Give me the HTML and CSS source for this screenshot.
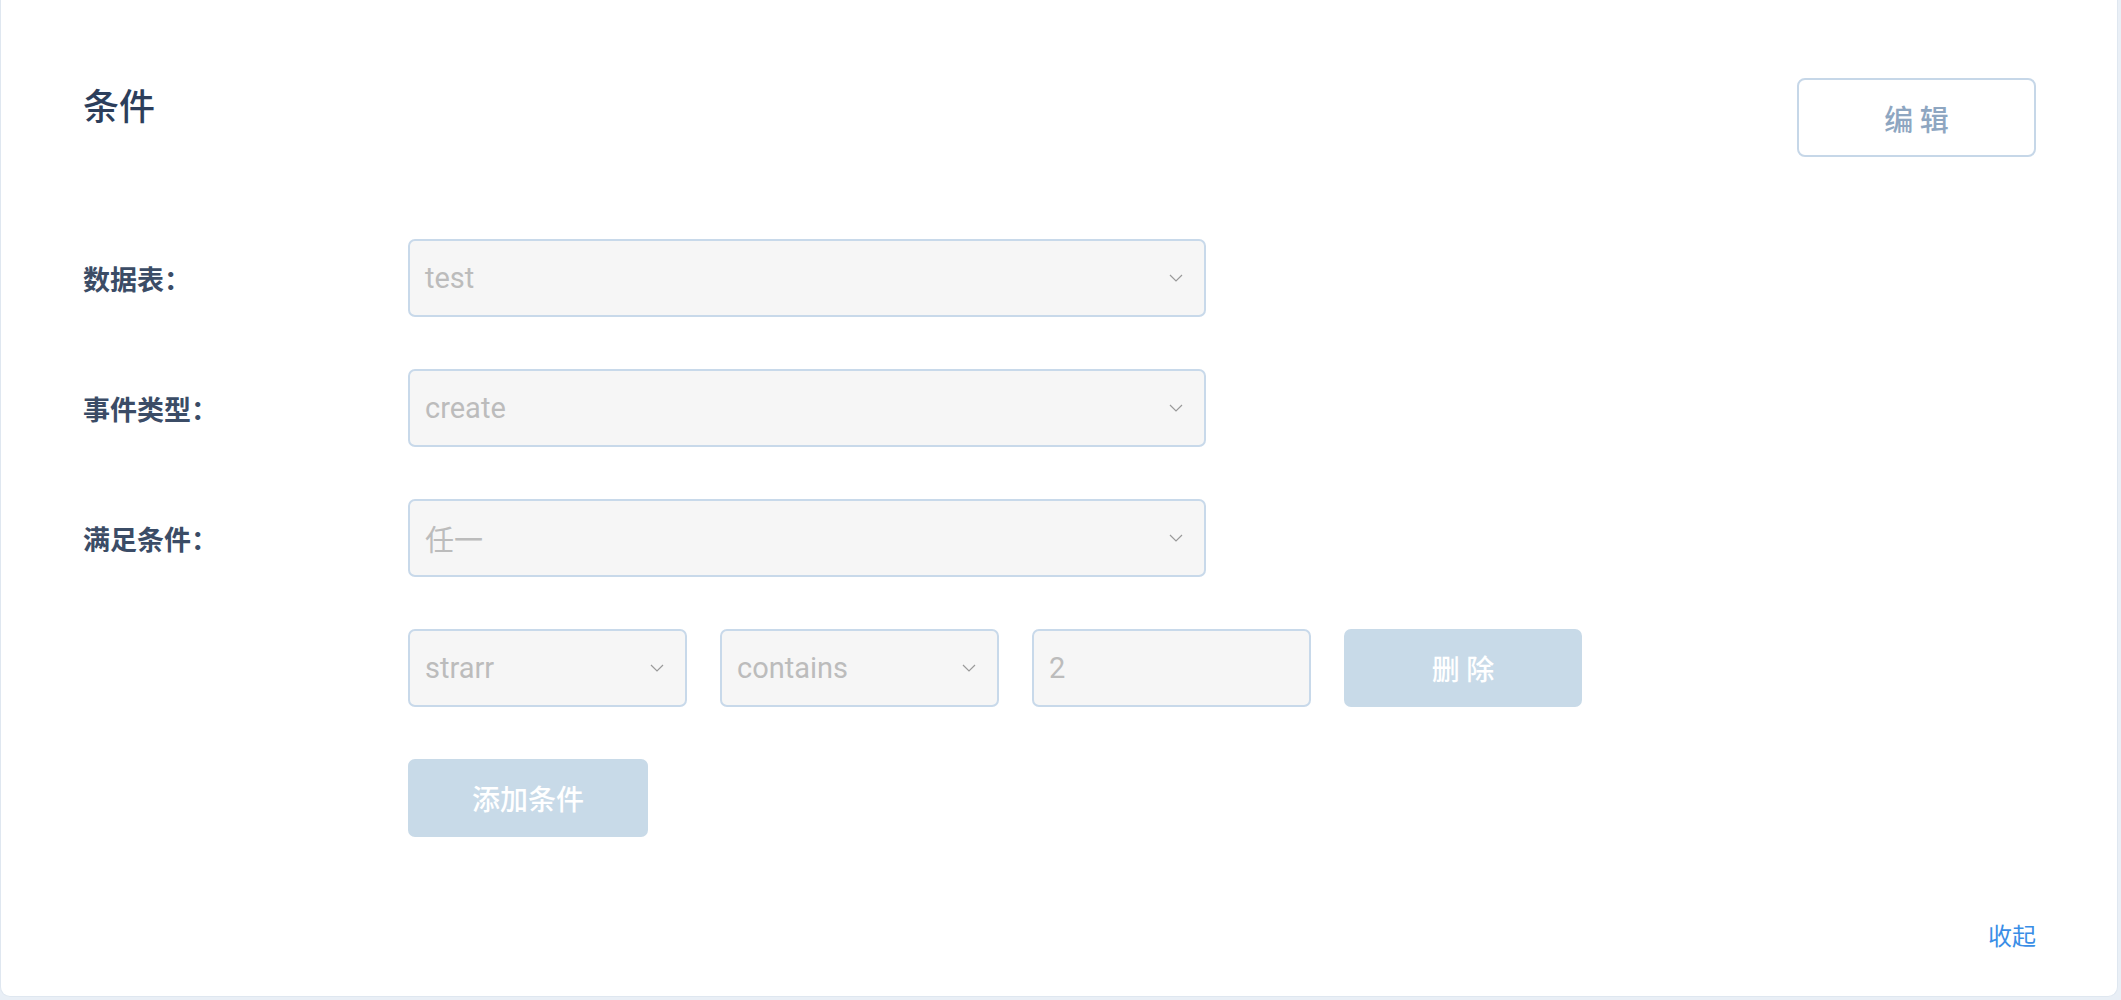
FILE: index.html
```html
<!DOCTYPE html>
<html lang="zh-CN">
<head>
    <meta charset="UTF-8">
    <meta name="viewport" content="width=device-width, initial-scale=1.0">
    <title>条件</title>
    <link rel="stylesheet" href="styles.css">
</head>
<body>
    <div class="card">
        <div class="card-head">
            <h2 class="title">条件</h2>
            <button type="button" class="btn-outline">编 辑</button>
        </div>

        <div class="form">
            <div class="form-row">
                <label class="form-label">数据表：</label>
                <div class="select wide">
                    <span>test</span>
                    <svg class="arrow" width="14" height="8" viewBox="0 0 14 8"><path d="M1 1l6 6 6-6" fill="none" stroke="#9a9a9a" stroke-width="1.2"/></svg>
                </div>
            </div>
            <div class="form-row">
                <label class="form-label">事件类型：</label>
                <div class="select wide">
                    <span>create</span>
                    <svg class="arrow" width="14" height="8" viewBox="0 0 14 8"><path d="M1 1l6 6 6-6" fill="none" stroke="#9a9a9a" stroke-width="1.2"/></svg>
                </div>
            </div>
            <div class="form-row">
                <label class="form-label">满足条件：</label>
                <div class="select wide">
                    <span>任一</span>
                    <svg class="arrow" width="14" height="8" viewBox="0 0 14 8"><path d="M1 1l6 6 6-6" fill="none" stroke="#9a9a9a" stroke-width="1.2"/></svg>
                </div>
            </div>
            <div class="form-row">
                <span class="form-label"></span>
                <div class="cond">
                    <div class="select small">
                        <span>strarr</span>
                        <svg class="arrow" width="14" height="8" viewBox="0 0 14 8"><path d="M1 1l6 6 6-6" fill="none" stroke="#9a9a9a" stroke-width="1.2"/></svg>
                    </div>
                    <div class="select small">
                        <span>contains</span>
                        <svg class="arrow" width="14" height="8" viewBox="0 0 14 8"><path d="M1 1l6 6 6-6" fill="none" stroke="#9a9a9a" stroke-width="1.2"/></svg>
                    </div>
                    <div class="select small">
                        <span>2</span>
                    </div>
                    <button type="button" class="btn-fill del">删 除</button>
                </div>
            </div>
            <div class="form-row">
                <span class="form-label"></span>
                <button type="button" class="btn-fill add">添加条件</button>
            </div>
        </div>

        <div class="card-foot">
            <a class="link">收起</a>
        </div>
    </div>
</body>
</html>
```

FILE: styles.css
```css
body {
    margin: 0;
    padding: 0;
    background-color: #e9eff6;
    font-family: "Noto Sans CJK SC", "Noto Sans", sans-serif;
}

.card {
    box-sizing: border-box;
    height: 997px;
    margin: 0 3px 0 0;
    padding: 78px 81px 46px 82px;
    background-color: #fff;
    border: 1px solid #dfe7f0;
    border-top: none;
    border-radius: 0 0 10px 10px;
    display: flex;
    flex-direction: column;
}

.card-head {
    display: flex;
    justify-content: space-between;
    align-items: flex-start;
    margin-bottom: 82px;
}

.title {
    margin: 0;
    font-size: 36px;
    line-height: 52px;
    font-weight: 500;
    color: #2c3e5b;
}

.btn-outline {
    width: 239px;
    height: 79px;
    background-color: #fff;
    border: 2px solid #c6d7e8;
    border-radius: 8px;
    color: #8ea6c1;
    font-family: inherit;
    font-size: 29px;
    font-weight: 500;
    cursor: pointer;
}

.form {
    display: flex;
    flex-direction: column;
    gap: 52px;
}

.form-row {
    display: flex;
    align-items: center;
}

.form-label {
    width: 325px;
    flex-shrink: 0;
    font-size: 27px;
    font-weight: 600;
    color: #3b4c66;
}

.select {
    box-sizing: border-box;
    height: 78px;
    padding: 0 21px 0 15px;
    display: flex;
    align-items: center;
    justify-content: space-between;
    background-color: #f6f6f6;
    border: 2px solid #c8d9ea;
    border-radius: 7px;
    font-family: Roboto, "Noto Sans CJK SC", sans-serif;
    font-size: 29px;
    color: #bcbcbc;
}

.select.wide {
    width: 798px;
}

.select.small {
    width: 279px;
}

.arrow {
    flex-shrink: 0;
}

.cond {
    display: flex;
    gap: 33px;
}

.btn-fill {
    height: 78px;
    background-color: #c8dae8;
    border: none;
    border-radius: 7px;
    color: #fff;
    font-family: inherit;
    font-size: 28px;
    font-weight: 500;
    cursor: pointer;
}

.btn-fill.del {
    width: 238px;
}

.btn-fill.add {
    width: 240px;
}

.card-foot {
    margin-top: auto;
    text-align: right;
}

.link {
    font-size: 24px;
    line-height: 24px;
    color: #3a8ee6;
    cursor: pointer;
}
```
